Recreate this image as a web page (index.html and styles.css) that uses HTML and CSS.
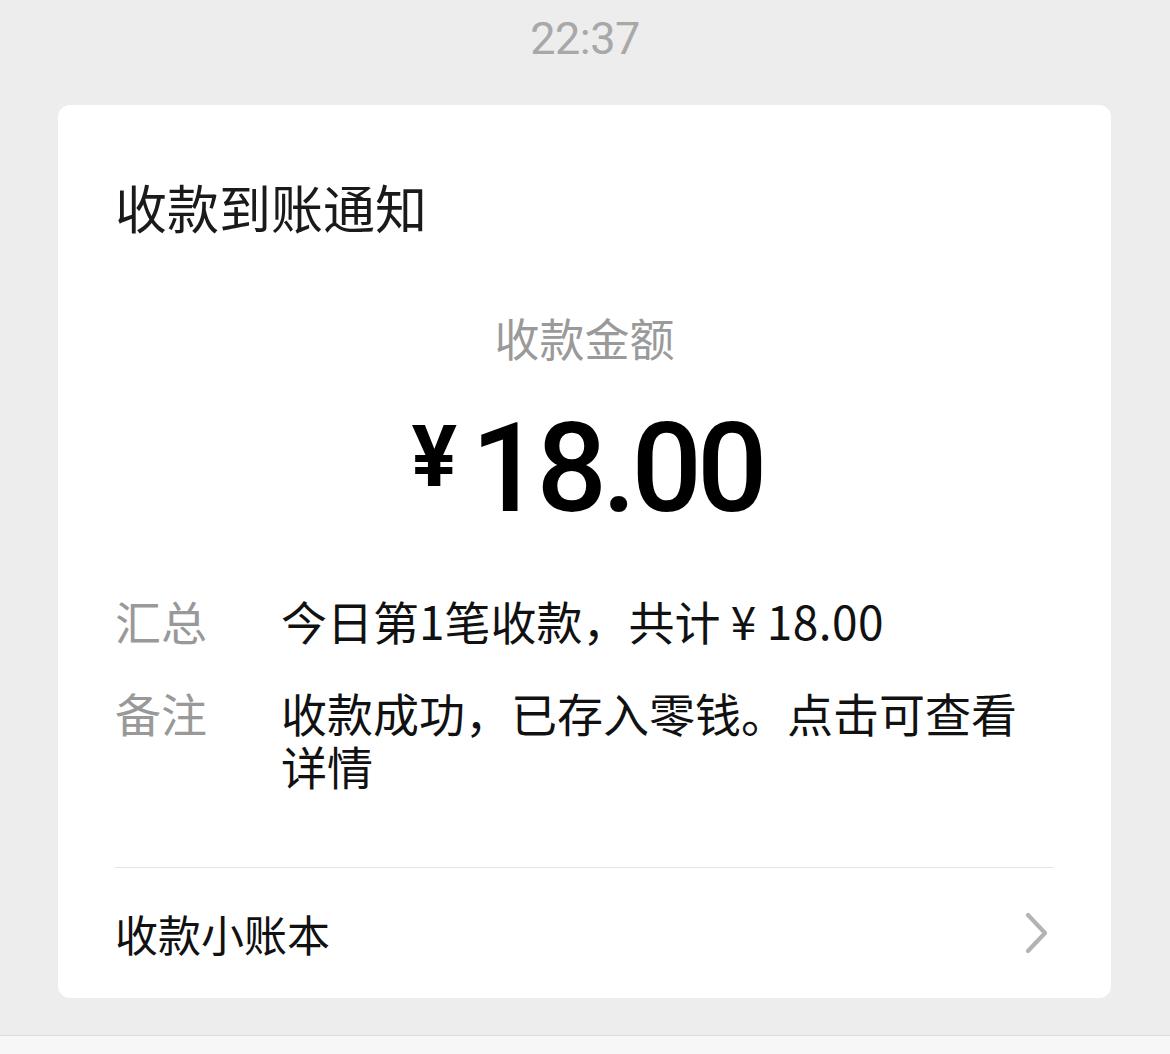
FILE: index.html
```html
<!DOCTYPE html>
<html lang="zh-CN">
<head>
<meta charset="utf-8">
<title>收款到账通知</title>
<link rel="stylesheet" href="styles.css">
</head>
<body>
<div class="page">
  <div class="time">22:37</div>
  <div class="card">
    <div class="title">收款到账通知</div>
    <div class="amount-label">收款金额</div>
    <div class="amount"><span class="yen">¥</span><span class="num">18.00</span></div>
    <div class="row row-first">
      <div class="label">汇总</div>
      <div class="value">今日第1笔收款，共计 ¥ <span class="digits">18.00</span></div>
    </div>
    <div class="row row-second">
      <div class="label">备注</div>
      <div class="value">收款成功，已存入零钱。点击可查看详情</div>
    </div>
    <div class="divider"></div>
    <div class="footer">
      <div class="footer-text">收款小账本</div>
      <svg class="chevron" width="26" height="42" viewBox="0 0 26 42"><path d="M4 3 L21 21 L4 39" fill="none" stroke="#b3b3b3" stroke-width="4.2" stroke-linecap="round" stroke-linejoin="round"/></svg>
    </div>
  </div>
  <div class="spacer"></div>
  <div class="bottom-bar"></div>
</div>
</body>
</html>
```
FILE: styles.css
```css
* { box-sizing: border-box; }
html, body { margin: 0; padding: 0; }
body {
  background: #ededed;
  font-family: "Noto Sans CJK SC", "Noto Sans", sans-serif;
  width: 1170px;
  height: 1054px;
  overflow: hidden;
}
.page {
  display: flex;
  flex-direction: column;
  height: 1054px;
}
.time {
  height: 105px;
  line-height: 78px;
  text-align: center;
  font-family: Roboto, "Liberation Sans", sans-serif;
  font-size: 45px;
  color: #a8a8a8;
  letter-spacing: -0.5px;
}
.card {
  margin: 0 59px 0 58px;
  background: #ffffff;
  border-radius: 12px;
  padding: 67px 57px 0 57px;
}
.title {
  font-size: 52px;
  line-height: 70px;
  color: #1a1a1a;
}
.amount-label {
  margin-top: 66px;
  font-size: 45px;
  line-height: 60px;
  text-align: center;
  color: #9a9a9a;
}
.amount {
  margin-top: 36px;
  display: flex;
  justify-content: center;
  align-items: flex-start;
  height: 130px;
  color: #000;
  font-family: Roboto, "Liberation Sans", sans-serif;
}
.yen {
  font-size: 85px;
  line-height: 85px;
  font-weight: 700;
  margin-top: 11px;
  margin-right: 14px;
}
.num {
  font-size: 124px;
  line-height: 130px;
  font-weight: 500;
  letter-spacing: -5px;
  margin-right: -5px;
}
.row {
  display: flex;
  font-size: 46px;
  line-height: 53px;
}
.row-first { margin-top: 60px; }
.row-second { margin-top: 39px; }
.label {
  width: 166px;
  flex: none;
  color: #999999;
}
.value {
  flex: 1;
  color: #111111;
}
.digits {
  letter-spacing: 0.5px;
}
.divider {
  margin-top: 75px;
  height: 1px;
  background: #e6e6e6;
}
.footer {
  height: 130px;
  display: flex;
  align-items: center;
  justify-content: space-between;
}
.footer-text {
  font-size: 43px;
  line-height: 60px;
  color: #111111;
}
.chevron {
  margin-right: 4px;
}
.spacer {
  flex: 1;
}
.bottom-bar {
  height: 19px;
  border-top: 1px solid #dcdcdc;
  background: #f7f7f7;
}
```
